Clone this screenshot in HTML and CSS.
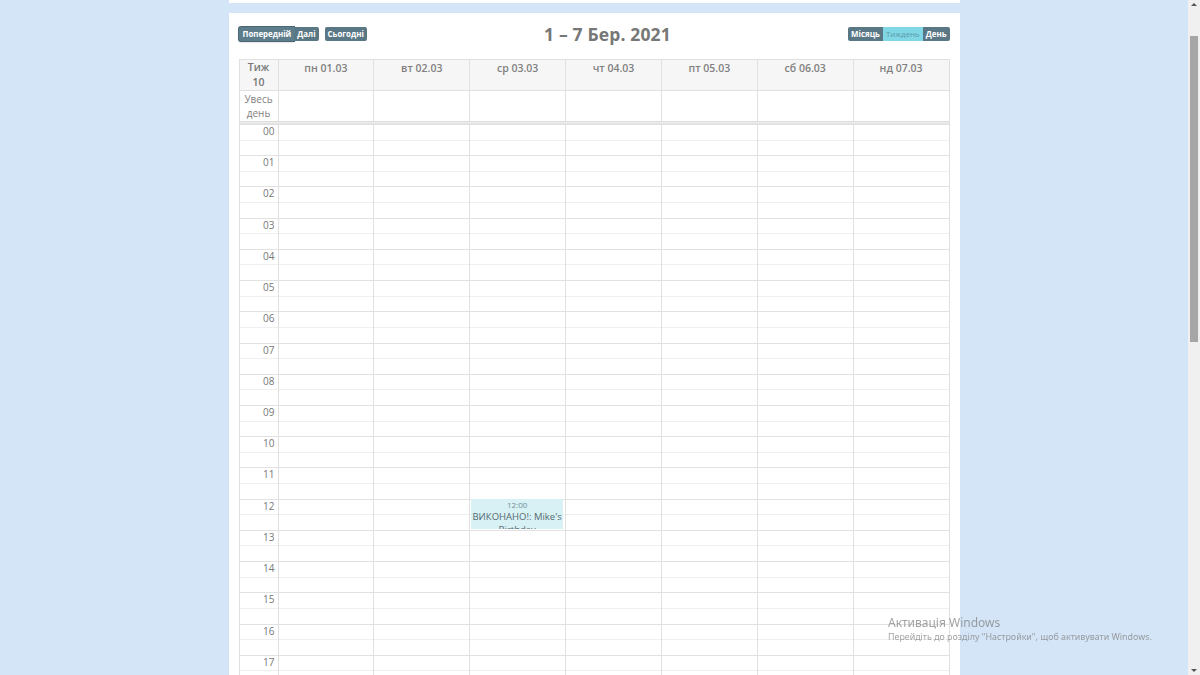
FILE: index.html
```html
<!DOCTYPE html>
<html lang="uk">
<head>
<meta charset="utf-8">
<title>Календар</title>
<link rel="stylesheet" href="styles.css">
</head>
<body>
<div class="viewport">
  <div class="page">
    <div class="strip"></div>
    <div class="card">
      <div class="toolbar">
        <div class="tb-left">
          <div class="btn-group">
            <span class="btn focus">Попередній</span><span class="btn">Далі</span>
          </div>
          <span class="btn">Сьогодні</span>
        </div>
        <h2 class="title">1 – 7 Бер. 2021</h2>
        <div class="tb-right">
          <div class="btn-group">
            <span class="btn">Місяць</span><span class="btn active">Тиждень</span><span class="btn">День</span>
          </div>
        </div>
      </div>

      <div class="cal">
        <div class="head row8">
          <div class="hcell axis">Тиж<br>10</div>
          <div class="hcell">пн 01.03</div>
          <div class="hcell">вт 02.03</div>
          <div class="hcell">ср 03.03</div>
          <div class="hcell">чт 04.03</div>
          <div class="hcell">пт 05.03</div>
          <div class="hcell">сб 06.03</div>
          <div class="hcell">нд 07.03</div>
        </div>
        <div class="allday row8">
          <div class="acell axis">Увесь<br>день</div>
          <div class="acell"></div><div class="acell"></div><div class="acell"></div><div class="acell"></div>
          <div class="acell"></div><div class="acell"></div><div class="acell"></div>
        </div>
        <div class="divider"></div>
        <div class="timegrid">
          <div class="slats">
            <div class="slat major"><span class="lbl">00</span><span class="fill"></span></div><div class="slat minor"><span class="lbl"></span><span class="fill"></span></div>
            <div class="slat major"><span class="lbl">01</span><span class="fill"></span></div><div class="slat minor"><span class="lbl"></span><span class="fill"></span></div>
            <div class="slat major"><span class="lbl">02</span><span class="fill"></span></div><div class="slat minor"><span class="lbl"></span><span class="fill"></span></div>
            <div class="slat major"><span class="lbl">03</span><span class="fill"></span></div><div class="slat minor"><span class="lbl"></span><span class="fill"></span></div>
            <div class="slat major"><span class="lbl">04</span><span class="fill"></span></div><div class="slat minor"><span class="lbl"></span><span class="fill"></span></div>
            <div class="slat major"><span class="lbl">05</span><span class="fill"></span></div><div class="slat minor"><span class="lbl"></span><span class="fill"></span></div>
            <div class="slat major"><span class="lbl">06</span><span class="fill"></span></div><div class="slat minor"><span class="lbl"></span><span class="fill"></span></div>
            <div class="slat major"><span class="lbl">07</span><span class="fill"></span></div><div class="slat minor"><span class="lbl"></span><span class="fill"></span></div>
            <div class="slat major"><span class="lbl">08</span><span class="fill"></span></div><div class="slat minor"><span class="lbl"></span><span class="fill"></span></div>
            <div class="slat major"><span class="lbl">09</span><span class="fill"></span></div><div class="slat minor"><span class="lbl"></span><span class="fill"></span></div>
            <div class="slat major"><span class="lbl">10</span><span class="fill"></span></div><div class="slat minor"><span class="lbl"></span><span class="fill"></span></div>
            <div class="slat major"><span class="lbl">11</span><span class="fill"></span></div><div class="slat minor"><span class="lbl"></span><span class="fill"></span></div>
            <div class="slat major"><span class="lbl">12</span><span class="fill"></span></div><div class="slat minor"><span class="lbl"></span><span class="fill"></span></div>
            <div class="slat major"><span class="lbl">13</span><span class="fill"></span></div><div class="slat minor"><span class="lbl"></span><span class="fill"></span></div>
            <div class="slat major"><span class="lbl">14</span><span class="fill"></span></div><div class="slat minor"><span class="lbl"></span><span class="fill"></span></div>
            <div class="slat major"><span class="lbl">15</span><span class="fill"></span></div><div class="slat minor"><span class="lbl"></span><span class="fill"></span></div>
            <div class="slat major"><span class="lbl">16</span><span class="fill"></span></div><div class="slat minor"><span class="lbl"></span><span class="fill"></span></div>
            <div class="slat major"><span class="lbl">17</span><span class="fill"></span></div><div class="slat minor"><span class="lbl"></span><span class="fill"></span></div>
            <div class="slat major"><span class="lbl">18</span><span class="fill"></span></div><div class="slat minor"><span class="lbl"></span><span class="fill"></span></div>
          </div>
          <div class="cols row8">
            <div class="col axis"></div>
            <div class="col"></div>
            <div class="col"></div>
            <div class="col">
              <div class="event" style="margin-top:374.9px">
                <div class="ev-time">12:00</div>
                <div class="ev-title">ВИКОНАНО!: Mike's Birthday</div>
              </div>
            </div>
            <div class="col"></div>
            <div class="col"></div>
            <div class="col"></div>
            <div class="col"></div>
          </div>
        </div>
      </div>
    </div>
  </div>
  <div class="scrollbar">
    <span class="arrow up"></span>
    <span class="thumb"></span>
    <span class="track"></span>
    <span class="arrow down"></span>
  </div>
</div>
<div class="watermark">
  <div class="wm-title">Активація Windows</div>
  <div class="wm-sub">Перейдіть до розділу "Настройки", щоб активувати Windows.</div>
</div>
</body>
</html>
```
FILE: styles.css
```css
* { box-sizing: border-box; }
html, body { margin: 0; padding: 0; height: 100%; overflow: hidden; }
body {
  background: #d4e5f7;
  font-family: "Open Sans", "Noto Sans", sans-serif;
  color: #666;
}
.viewport { display: flex; height: 675px; }
.page {
  flex: 1;
  display: flex;
  flex-direction: column;
  align-items: center;
  overflow: hidden;
}
.strip { width: 731px; height: 3px; background: #fff; flex: none; }
.card {
  width: 731px;
  margin-top: 10px;
  background: #fff;
  padding: 14px 10px 0;
  flex: 1;
  overflow: hidden;
}
.toolbar {
  display: flex;
  align-items: center;
  height: 14px;
  margin-bottom: 18px;
}
.tb-left, .tb-right { display: flex; align-items: center; gap: 6px; flex: none; }
.title {
  flex: 1;
  text-align: center;
  margin: 0;
  font-size: 17.5px;
  font-weight: 700;
  color: #777;
  line-height: 20px;
  letter-spacing: 0.15px;
}
.btn-group { display: flex; }
.btn {
  display: inline-block;
  height: 14px;
  line-height: 14px;
  padding: 0 3px;
  font-size: 7.9px;
  font-weight: 700;
  color: #fff;
  background: #5a7785;
  border-radius: 2px;
  white-space: nowrap;
}
.btn-group .btn { border-radius: 0; }
.btn-group .btn:first-child { border-radius: 2px 0 0 2px; }
.btn-group .btn:last-child { border-radius: 0 2px 2px 0; }
.btn.focus { box-shadow: 0 0 0 1px #4b6775, 0 1px 2px rgba(0,0,0,0.35); background: #5d7d8b; padding: 0 3px 0 4px; }
.btn.active { background: #80d8e6; color: #5d98a6; font-weight: 400; }

.cal {
  border-left: 1px solid #e0e0e0;
  border-right: 1px solid #e0e0e0;
}
.row8 { display: grid; grid-template-columns: 38px repeat(7, 1fr); }
.head { background: #f6f6f6; border-top: 1px solid #e0e0e0; height: 31px; }
.hcell {
  border-left: 1px solid #e0e0e0;
  text-align: center;
  font-size: 10.5px;
  font-weight: 600;
  color: #808080;
  line-height: 15px;
  padding-top: 1px;
}
.hcell.axis { padding-top: 0; color: #777; }
.hcell:first-child, .acell:first-child, .col:first-child { border-left: none; }
.allday { border-top: 1px solid #e0e0e0; height: 31px; }
.acell { border-left: 1px solid #e0e0e0; }
.acell.axis {
  text-align: center;
  font-size: 10px;
  line-height: 14px;
  color: #808080;
  padding-top: 1px;
}
.divider {
  height: 3px;
  background: #eeeeee;
  border-top: 1px solid #dcdcdc;
  border-bottom: 1px solid #e4e4e4;
}
.timegrid { display: grid; }
.slats, .cols { grid-area: 1 / 1; }
.slat { display: flex; height: 15.62px; }
.slat.major { border-top: 1px solid #e2e2e2; }
.slat.minor { border-top: 1px solid #efefef; }
.slat .lbl {
  width: 38px;
  flex: none;
  text-align: right;
  padding-right: 3px;
  font-size: 10px;
  line-height: 13px;
  color: #777;
}
.slat .fill { flex: 1; }
.col { border-left: 1px solid #e0e0e0; min-width: 0; }
.event {
  margin-left: 1px;
  margin-right: 2px;
  height: 30px;
  background: #d8f1f5;
  overflow: hidden;
  text-align: center;
  padding-top: 1px;
}
.ev-time { font-size: 8px; line-height: 10px; color: #6f8f96; }
.ev-title { font-size: 9.5px; line-height: 13px; color: #556a70; }

.scrollbar {
  width: 12px;
  flex: none;
  background: #f0f0f0;
  display: flex;
  flex-direction: column;
  align-items: center;
}
.arrow { width: 0; height: 0; border-left: 3px solid transparent; border-right: 3px solid transparent; margin: 3px 0; flex: none; }
.arrow.up { border-bottom: 3px solid #555; }
.arrow.down { border-top: 3px solid #555; }
.thumb { width: 8px; height: 306px; background: #a6a6a6; margin-top: 27px; flex: none; }
.track { flex: 1; }

.watermark {
  position: fixed;
  left: 888px;
  top: 614px;
  color: rgba(130,130,130,0.75);
  font-family: "Noto Sans", "Open Sans", sans-serif;
  pointer-events: none;
}
.wm-title { font-size: 12px; line-height: 17px; }
.wm-sub { font-size: 8.9px; line-height: 12px; }
```
